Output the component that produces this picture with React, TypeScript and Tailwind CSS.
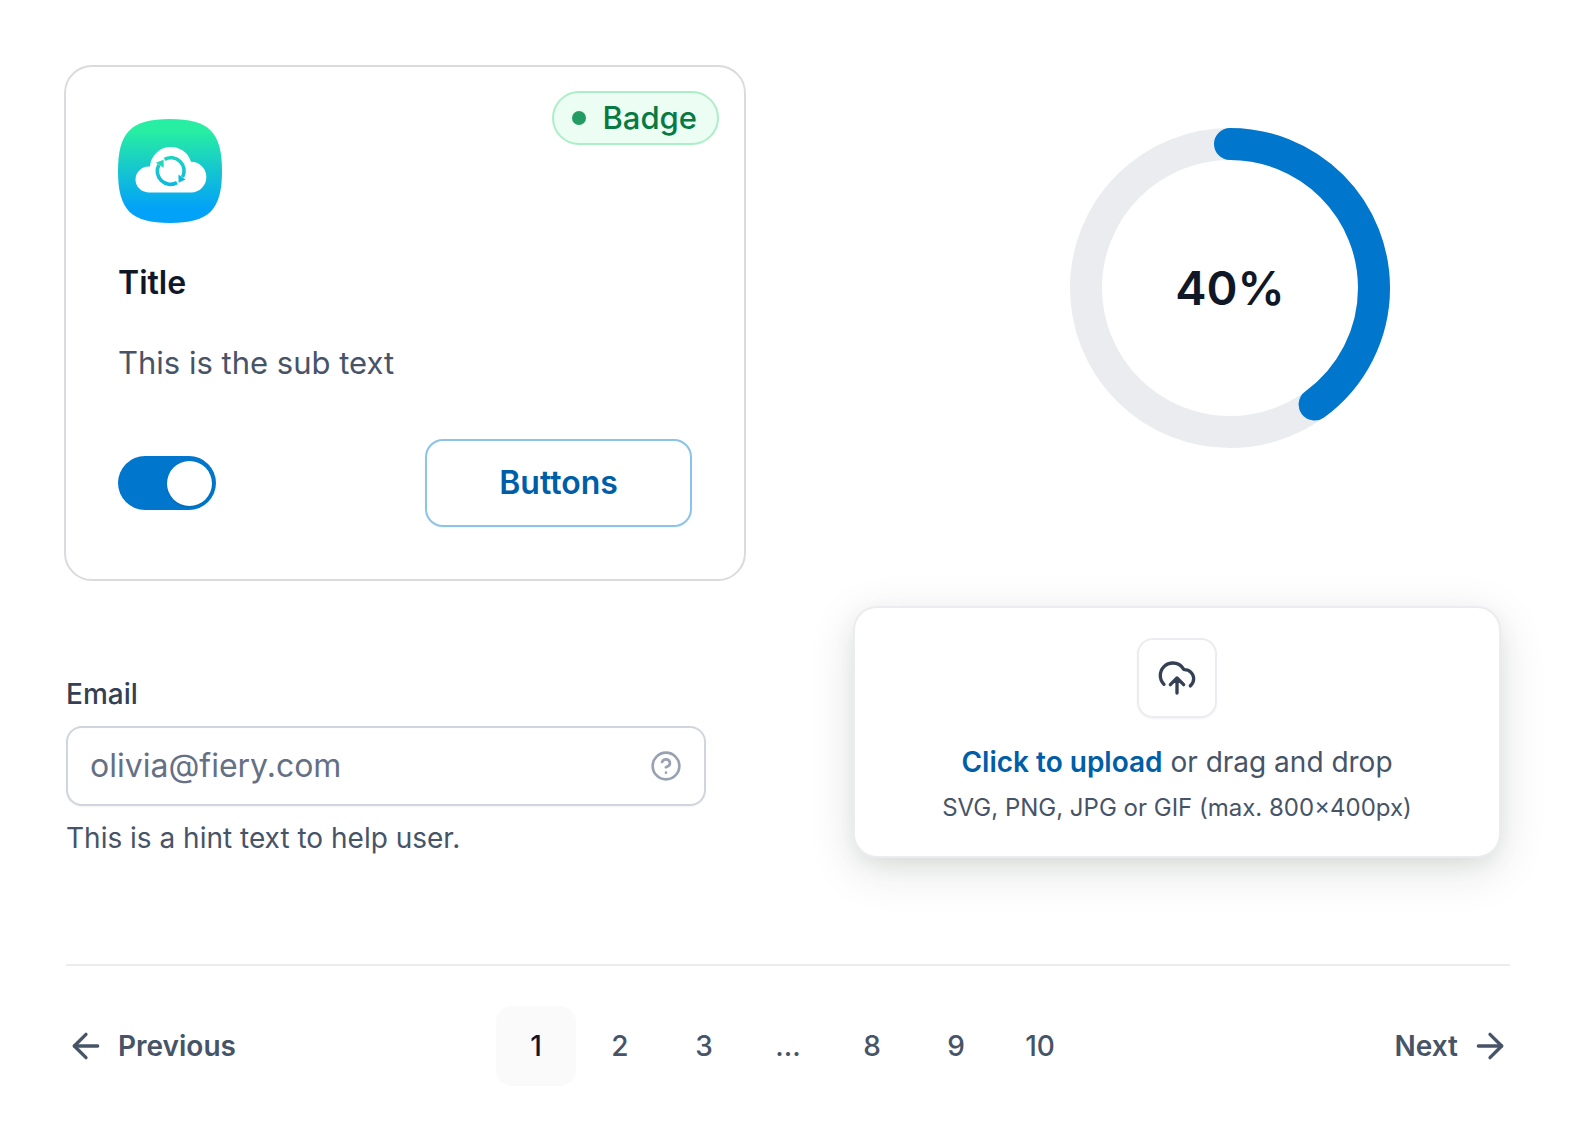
import { useState } from 'react';
import { ArrowLeft, ArrowRight, CircleQuestionMark } from 'lucide-react';

const PAGES = ['1', '2', '3', '...', '8', '9', '10'];

const CloudSyncLogo = () => (
  <svg viewBox="0 0 104 104" className="size-[104px]" aria-hidden="true">
    <defs>
      <linearGradient id="cloud-sync" gradientUnits="userSpaceOnUse" x1="0" y1="12" x2="0" y2="90">
        <stop offset="0" stopColor="#27eea3" />
        <stop offset="0.5" stopColor="#15c6cf" />
        <stop offset="1" stopColor="#02a2f8" />
      </linearGradient>
    </defs>
    <path
      d="M0 52C0 13 13 0 52 0S104 13 104 52 91 104 52 104 0 91 0 52Z"
      fill="url(#cloud-sync)"
    />
    <path
      d="M30.4 73.4A12.9 12.9 0 0 1 30.4 47.6H32A21 21 0 0 1 73 42.7A15.35 15.35 0 0 1 73 73.4Z"
      fill="#fff"
    />
    <g fill="none" stroke="url(#cloud-sync)" strokeWidth="3.6">
      <path d="M46.6 40.3A13.2 13.2 0 0 1 64.6 58" />
      <path d="M59 63.6A13.2 13.2 0 0 1 40.9 45.8" />
    </g>
    <path d="M37.8 43.8L45.6 40.8V48.8Z" fill="#1dd8bb" />
    <path d="M60.4 55.4L60.6 63.8L67.6 60.6Z" fill="#12b9d9" />
  </svg>
);

const UploadCloudIcon = () => (
  <svg
    viewBox="0 0 24 24"
    className="size-10"
    fill="none"
    stroke="currentColor"
    strokeWidth="2"
    strokeLinecap="round"
    strokeLinejoin="round"
    aria-hidden="true"
  >
    <path d="M8 16L12 12M12 12L16 16M12 12V21M20 16.7428C21.2215 15.734 22 14.2079 22 12.5C22 9.46243 19.5376 7 16.5 7C16.2815 7 16.0771 6.886 15.9661 6.69774C14.6621 4.48484 12.2544 3 9.5 3C5.35786 3 2 6.35786 2 10.5C2 12.5661 2.83545 14.4371 4.18695 15.7935" />
  </svg>
);

const FeatureCard = () => {
  const [enabled, setEnabled] = useState(true);

  return (
    <section className="relative rounded-[28px] border-2 border-[#d9dbde] p-[52px]">
      <span className="absolute top-6 right-[25px] flex h-[54px] items-center gap-4 rounded-full border-2 border-[#abefc6] bg-[#ecfdf3] pr-5 pl-[18px] text-[31px] font-medium text-[#067a42]">
        <span className="size-3.5 rounded-full bg-[#249b63]" />
        Badge
      </span>
      <CloudSyncLogo />
      <h2 className="mt-9 text-[32px] leading-12 font-semibold text-[#101828]">Title</h2>
      <p className="mt-8 text-[31px] leading-12 text-[#475467]">This is the sub text</p>
      <div className="mt-[52px] flex items-center justify-between">
        <input
          type="checkbox"
          role="switch"
          aria-label="Enable"
          checked={enabled}
          onChange={(e) => setEnabled(e.target.checked)}
          className="flex h-[54px] w-[98px] cursor-pointer appearance-none items-center rounded-full bg-[#d0d5dd] px-1 transition-colors before:size-[45px] before:rounded-full before:bg-white before:shadow-sm checked:justify-end checked:bg-[#0077cc]"
        />
        <button className="h-[88px] w-[267px] rounded-[18px] border-2 border-[#8cc3e9] text-[32px] font-semibold text-[#005ea8] shadow-xs hover:bg-[#f5faff]">
          Buttons
        </button>
      </div>
    </section>
  );
};

const ProgressCircle = ({ value }: { value: number }) => (
  <div className="grid size-80 place-items-center">
    <svg viewBox="0 0 320 320" className="col-start-1 row-start-1 size-full -rotate-90" fill="none" strokeWidth="32">
      <circle cx="160" cy="160" r="144" stroke="#eaecf0" />
      <circle
        cx="160"
        cy="160"
        r="144"
        stroke="#0077cc"
        strokeLinecap="round"
        pathLength="100"
        strokeDasharray={`${value} 100`}
      />
    </svg>
    <span className="col-start-1 row-start-1 text-[47px] font-semibold text-[#101828]">{value}%</span>
  </div>
);

const EmailField = () => (
  <div className="ml-0.5 flex flex-col gap-3 pt-[68px] text-[28px] leading-10">
    <label htmlFor="email" className="font-medium text-[#344054]">
      Email
    </label>
    <div className="flex h-20 items-center gap-4 rounded-2xl border-2 border-[#d0d5dd] px-[22px] shadow-xs">
      <input
        id="email"
        type="email"
        placeholder="olivia@fiery.com"
        aria-describedby="email-hint"
        className="min-w-0 flex-1 text-[32px] text-[#344054] outline-none placeholder:text-[#667085]"
      />
      <CircleQuestionMark className="size-8 text-[#98a2b3]" />
    </div>
    <p id="email-hint" className="text-[#475467]">
      This is a hint text to help user.
    </p>
  </div>
);

const FileUpload = () => (
  <div className="mr-[9px] flex flex-col items-center rounded-3xl border-2 border-[#eaecf0] bg-white p-[30px] text-[#475467] shadow-[0_12px_48px_rgba(16,32,24,0.12),0_8px_24px_-4px_rgba(16,32,24,0.08)]">
    <div className="grid size-20 place-items-center rounded-2xl border-2 border-[#eaecf0] text-[#344054] shadow-xs">
      <UploadCloudIcon />
    </div>
    <p className="mt-6 text-[28px] leading-10">
      <button className="cursor-pointer font-semibold text-[#005ea8]">Click to upload</button> or drag and drop
    </p>
    <p className="mt-2 text-[24px] leading-9">SVG, PNG, JPG or GIF (max. 800×400px)</p>
  </div>
);

const Pagination = () => {
  const [page, setPage] = useState('1');

  return (
    <nav className="ml-0.5 flex items-center justify-between border-t-2 border-[#eaecf0] pt-10 text-[28px] leading-10 text-[#475467]">
      <div className="flex-1">
        <button className="flex items-center gap-3 font-semibold">
          <ArrowLeft className="size-10" />
          Previous
        </button>
      </div>
      <div className="flex gap-1 font-medium">
        {PAGES.map((p) =>
          p === '...' ? (
            <span key={p} className="grid size-20 place-items-center">
              {p}
            </span>
          ) : (
            <button
              key={p}
              onClick={() => setPage(p)}
              className={`size-20 rounded-2xl ${p === page ? 'bg-[#fafafa] text-[#101828]' : 'hover:bg-[#fafafa]'}`}
            >
              {p}
            </button>
          )
        )}
      </div>
      <div className="flex flex-1 justify-end">
        <button className="flex items-center gap-3 font-semibold">
          Next
          <ArrowRight className="size-10" />
        </button>
      </div>
    </nav>
  );
};

export default function App() {
  return (
    <main className="bg-white pt-[65px] pr-[60px] pb-[62px] pl-16 font-['Inter',sans-serif]">
      <div className="grid grid-cols-[682fr_560fr] gap-[204px]">
        <FeatureCard />
        <div className="flex justify-center pt-[63px]">
          <ProgressCircle value={40} />
        </div>
      </div>
      <div className="mt-[25px] mb-[106px] grid grid-cols-[642fr_657fr] gap-[147px]">
        <EmailField />
        <FileUpload />
      </div>
      <Pagination />
    </main>
  );
}
